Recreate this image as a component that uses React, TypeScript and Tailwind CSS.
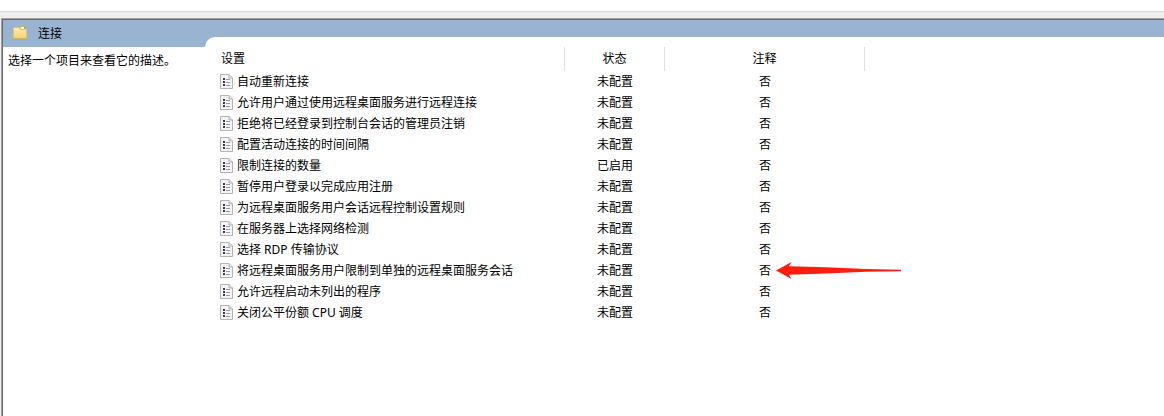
type Setting = { name: string; state: string; comment: string; marked?: boolean };

const settings: Setting[] = [
  { name: "自动重新连接", state: "未配置", comment: "否" },
  { name: "允许用户通过使用远程桌面服务进行远程连接", state: "未配置", comment: "否" },
  { name: "拒绝将已经登录到控制台会话的管理员注销", state: "未配置", comment: "否" },
  { name: "配置活动连接的时间间隔", state: "未配置", comment: "否" },
  { name: "限制连接的数量", state: "已启用", comment: "否" },
  { name: "暂停用户登录以完成应用注册", state: "未配置", comment: "否" },
  { name: "为远程桌面服务用户会话远程控制设置规则", state: "未配置", comment: "否" },
  { name: "在服务器上选择网络检测", state: "未配置", comment: "否" },
  { name: "选择 RDP 传输协议", state: "未配置", comment: "否" },
  { name: "将远程桌面服务用户限制到单独的远程桌面服务会话", state: "未配置", comment: "否", marked: true },
  { name: "允许远程启动未列出的程序", state: "未配置", comment: "否" },
  { name: "关闭公平份额 CPU 调度", state: "未配置", comment: "否" },
];

function FolderIcon() {
  return (
    <svg width="16" height="15" viewBox="0 0 16 15" aria-hidden="true">
      <defs>
        <linearGradient id="folder" x1="0" y1="0" x2="0" y2="1">
          <stop offset="0" stopColor="#ffeaa6" />
          <stop offset="1" stopColor="#f6d274" />
        </linearGradient>
      </defs>
      <path d="M6 3 7.500.500h6v4H6z" fill="#f0d080" stroke="#c9a95c" strokeWidth=".8" />
      <path d="M8 1h5v1.500H8z" fill="#fff" />
      <path d="M11 1h2v1.500h-2z" fill="#5aa0d0" />
      <path d="M.5 1.500h5.500l1.500 2h6v9.500h-13z" fill="url(#folder)" stroke="#e3c06a" strokeWidth=".9" />
      <path d="M.5 13h13" stroke="#c39c48" strokeWidth="1" />
    </svg>
  );
}

function PolicyIcon() {
  return (
    <svg className="shrink-0" width="13" height="15" viewBox="0 0 13 15" aria-hidden="true">
      <path d="M.5.5h8.500l3.500 3.500v10.500h-12z" fill="#f4f4f4" stroke="#b4b4b4" />
      <path d="M9 .5v3.500h3.500" fill="#dcdcdc" stroke="#b4b4b4" />
      <path d="M3 4h2v2H3zM3 7h2v2H3zM3 10h2v2H3z" fill="#3a3550" />
      <path d="M6 5.500h4M6 8.500h4M6 11.500h4" stroke="#9b98ae" />
    </svg>
  );
}

function Arrow() {
  return (
    <svg
      className="absolute left-1/2 top-0 ml-[11px] mt-[2px]"
      width="126"
      height="18"
      viewBox="0 0 126 18"
      aria-hidden="true"
    >
      <path d="M0 8.500 15.500 0 13 4.200 50 5.300 90 7 125 7.800v1.400L90 9.800 50 11.500 13 12.800 15.500 17z" fill="#ff1d0f" />
    </svg>
  );
}

export default function App() {
  return (
    <div className="flex min-h-screen flex-col bg-[#efefef] font-['Noto_Sans','Noto_Sans_CJK_SC',sans-serif] text-xs text-black">
      <div className="h-3 border-b border-[#d9d9d9] bg-white" />
      <main className="ml-px mt-1.5 flex grow flex-col border-l border-t border-[#a0a0a0]">
        <div className="flex grow border-l border-t border-[#696969] bg-[#99b4d1]">
          <aside className="flex w-[202px] shrink-0 flex-col">
            <h1 className="flex h-[27px] items-center gap-[9px] pl-[10px]">
              <FolderIcon />
              <span>连接</span>
            </h1>
            <p className="grow whitespace-nowrap bg-white pl-[5px] pt-1 leading-5">选择一个项目来查看它的描述。</p>
          </aside>
          <section className="mt-[17px] grow rounded-tl-[10px] bg-white pl-[10px] pt-[10px]">
            <table className="w-[650px] table-fixed border-collapse">
              <colgroup>
                <col className="w-[350px]" />
                <col className="w-[100px]" />
                <col className="w-[200px]" />
              </colgroup>
              <thead>
                <tr className="h-6">
                  <th className="p-0 font-normal">
                    <div className="h-6 border-r border-[#e2e2e2] pl-1.5 text-left leading-6">设置</div>
                  </th>
                  <th className="p-0 font-normal">
                    <div className="h-6 border-r border-[#e2e2e2] leading-6">状态</div>
                  </th>
                  <th className="p-0 font-normal">
                    <div className="h-6 border-r border-[#e2e2e2] leading-6">注释</div>
                  </th>
                </tr>
              </thead>
              <tbody>
                {settings.map((s) => (
                  <tr key={s.name} className="h-[21px]">
                    <td className="p-0">
                      <div className="flex h-[21px] items-center gap-1 whitespace-nowrap pl-[5px]">
                        <PolicyIcon />
                        <span>{s.name}</span>
                      </div>
                    </td>
                    <td className="p-0 text-center">{s.state}</td>
                    <td className="relative p-0 text-center">
                      {s.comment}
                      {s.marked && <Arrow />}
                    </td>
                  </tr>
                ))}
              </tbody>
            </table>
          </section>
        </div>
      </main>
    </div>
  );
}
